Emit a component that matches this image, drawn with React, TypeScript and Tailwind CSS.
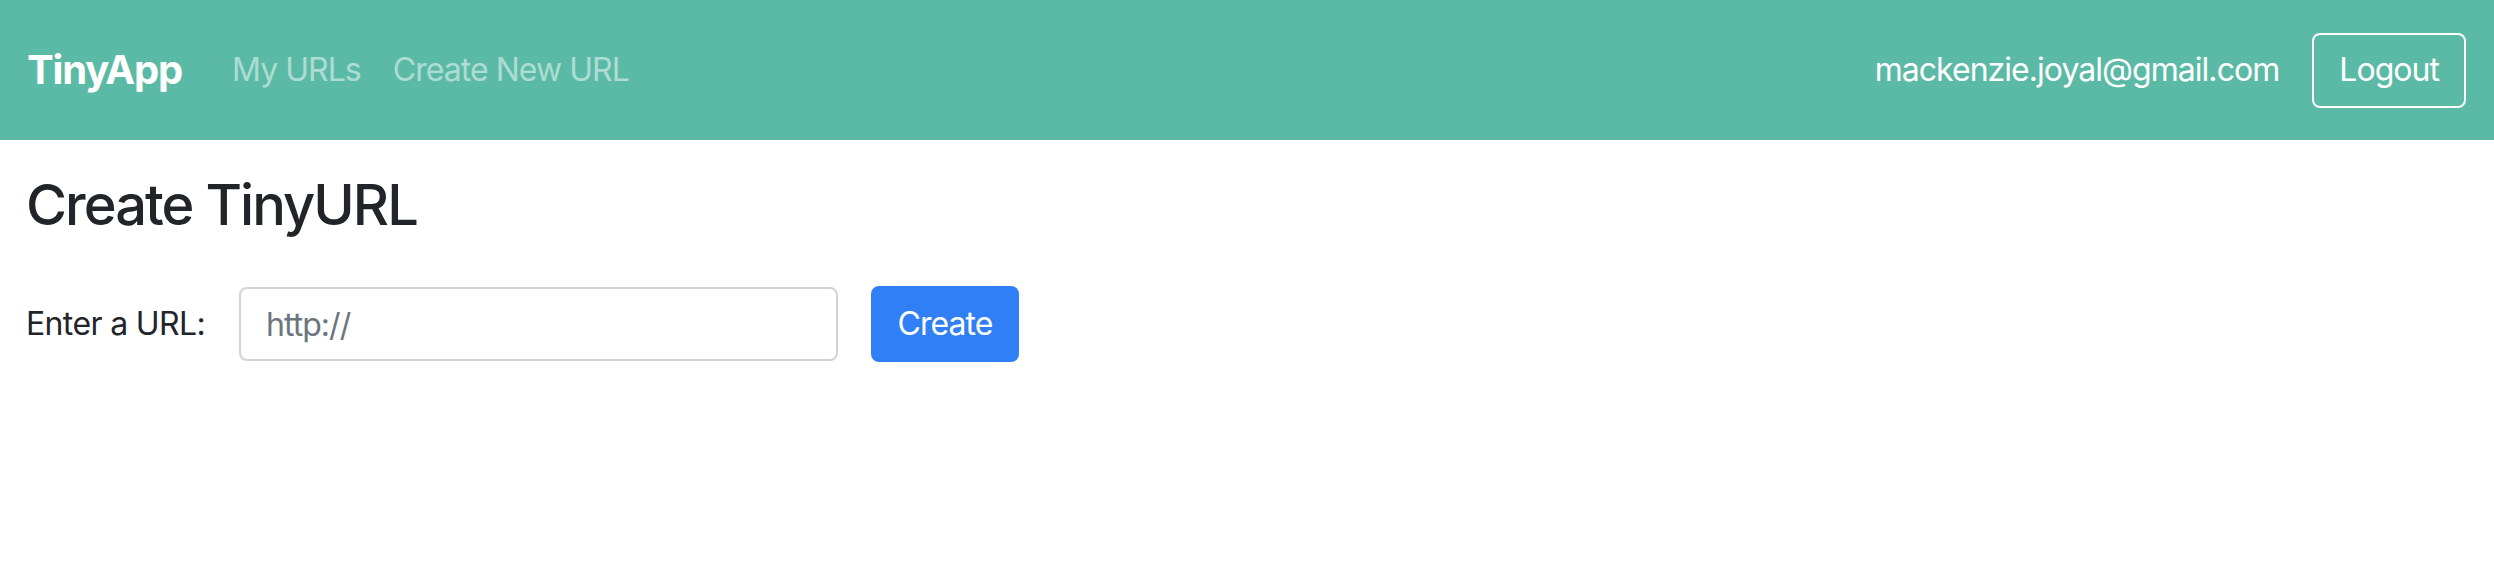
import React, { useState } from 'react';

const App: React.FC = () => {
  const [longURL, setLongURL] = useState('');

  const handleSubmit = (e: React.FormEvent) => {
    e.preventDefault();
  };

  return (
    <div className="min-h-screen bg-white text-[#212529] font-['Inter','Liberation_Sans',sans-serif]">
      {/* Navbar */}
      <nav className="flex h-[140px] items-center justify-between bg-[#5bbaa5] pl-[27px] pr-[28px]">
        <div className="flex items-center">
          <a href="#" className="mr-[34px] text-[40px] font-bold leading-none tracking-[-0.03em] text-white">
            TinyApp
          </a>
          <a href="#" className="px-4 text-[32px] leading-none tracking-[-0.03em] text-white/50">
            My URLs
          </a>
          <a href="#" className="px-4 text-[32px] leading-none tracking-[-0.03em] text-white/50">
            Create New URL
          </a>
        </div>
        <div className="flex items-center gap-[33px]">
          <span className="text-[32px] leading-none tracking-[-0.03em] text-white">mackenzie.joyal@gmail.com</span>
          <button
            type="button"
            className="h-[75px] rounded-[8px] border-2 border-white px-[25px] text-[32px] leading-none tracking-[-0.03em] text-white"
          >
            Logout
          </button>
        </div>
      </nav>

      {/* Page content */}
      <main className="pl-[26px] pt-[32px]">
        <h1 className="text-[56px] font-medium leading-[1.2] tracking-[-0.035em]">Create TinyURL</h1>
        <form onSubmit={handleSubmit} className="mt-[47px] flex items-center">
          <label htmlFor="longURL" className="text-[32px] leading-none tracking-[-0.02em]">
            Enter a URL:
          </label>
          <input
            id="longURL"
            type="text"
            value={longURL}
            onChange={(e) => setLongURL(e.target.value)}
            placeholder="http://"
            className="ml-[34px] h-[74px] w-[599px] rounded-[8px] border-2 border-[#ced4da] px-[25px] text-[32px] tracking-[-0.03em] text-[#495057] placeholder:text-[#6c757d] outline-none"
          />
          <button
            type="submit"
            className="ml-[33px] h-[76px] w-[148px] rounded-[8px] bg-[#317ff6] text-[32px] leading-none tracking-[-0.03em] text-white"
          >
            Create
          </button>
        </form>
      </main>
    </div>
  );
};

export default App;
